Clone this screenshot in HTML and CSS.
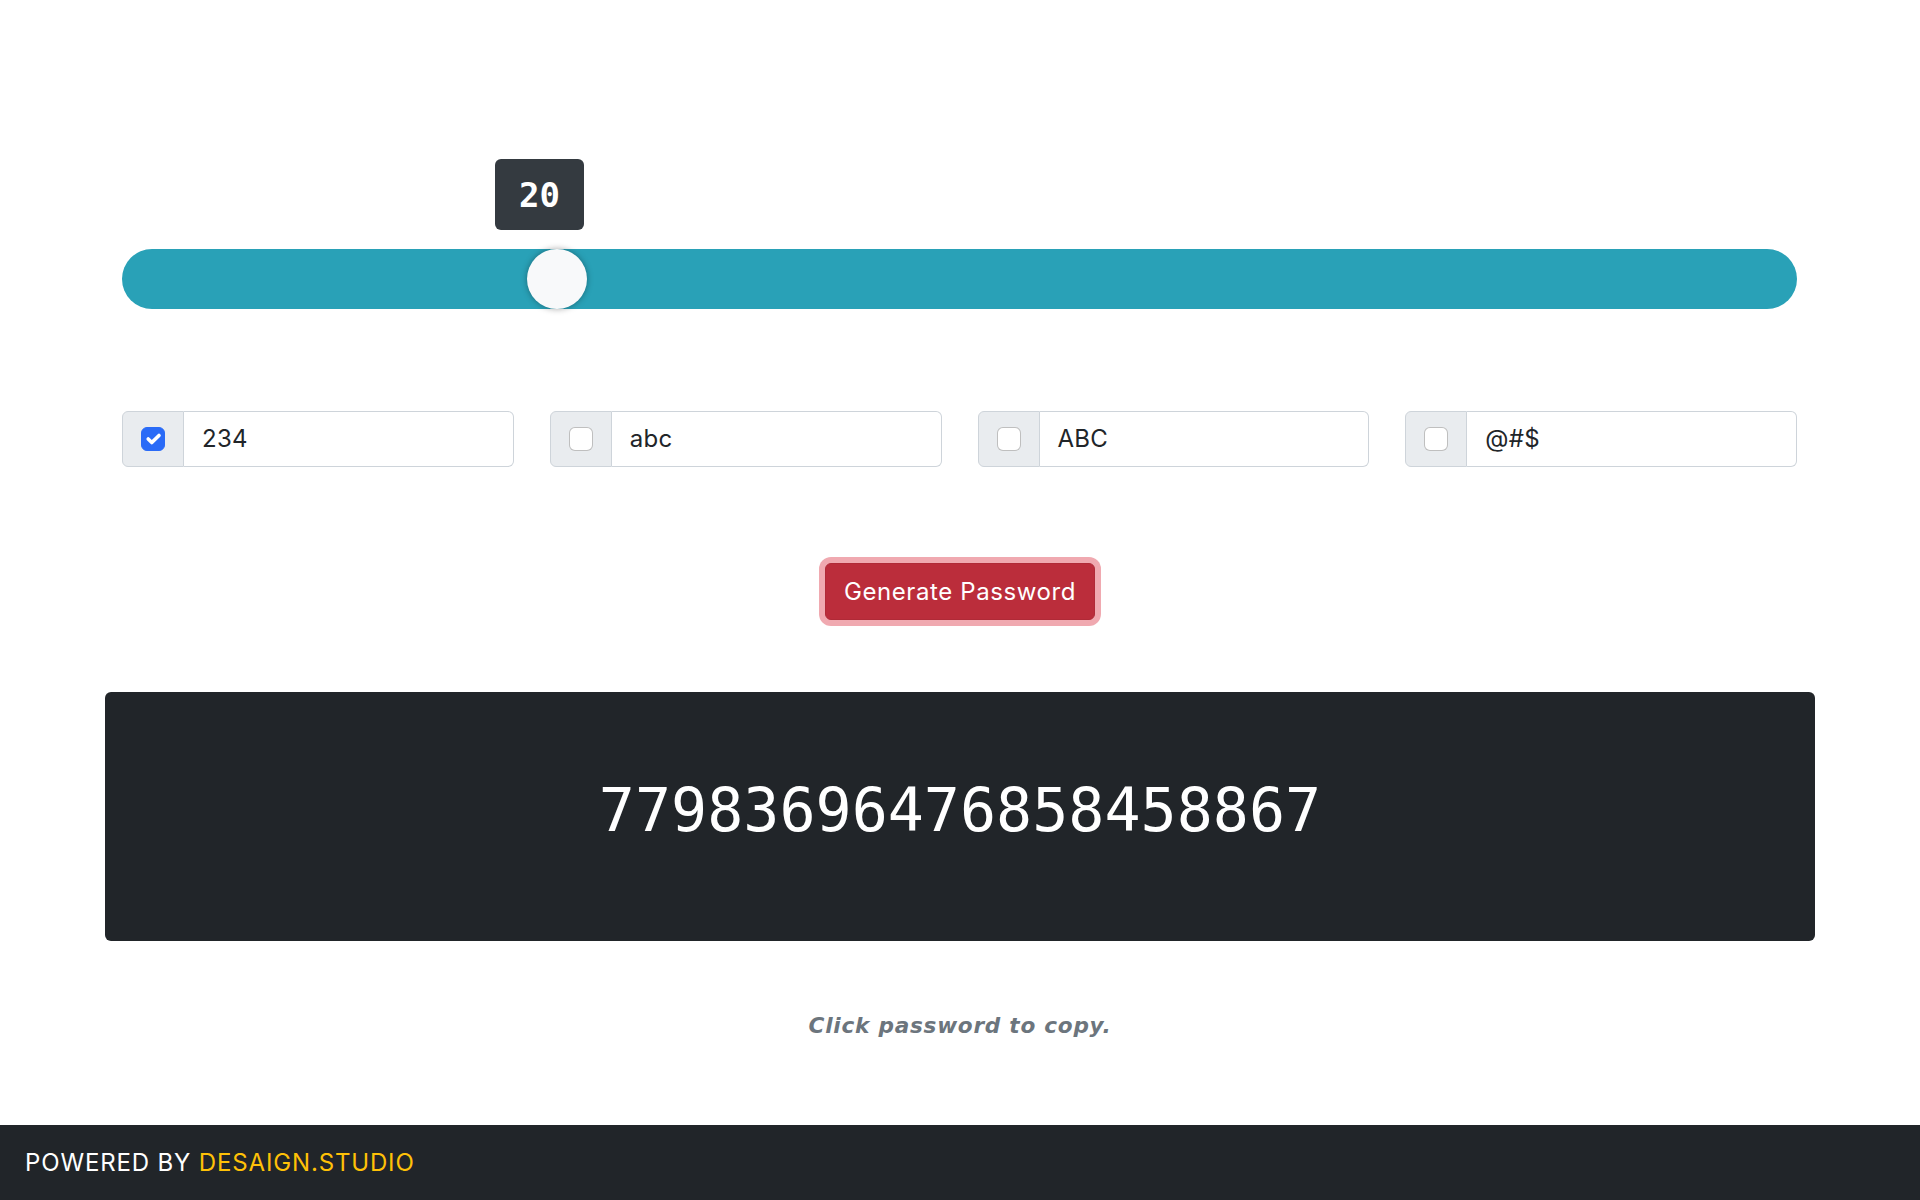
FILE: index.html
```html
<!DOCTYPE html>
<html lang="en">
<head>
<meta charset="utf-8">
<title>Password Generator</title>
<link rel="stylesheet" href="styles.css">
</head>
<body>
<main class="page">
  <div class="container">
    <div class="slider">
      <div class="track">
        <div class="thumb"></div>
      </div>
      <div class="bubble">20</div>
    </div>

    <div class="options">
      <div class="group">
        <span class="addon"><span class="check checked"><svg viewBox="0 0 20 20" width="24" height="24"><path d="M6 10l3 3l6-6" fill="none" stroke="#fff" stroke-width="3" stroke-linecap="round" stroke-linejoin="round"/></svg></span></span>
        <span class="field">234</span>
      </div>
      <div class="group">
        <span class="addon"><span class="check"></span></span>
        <span class="field">abc</span>
      </div>
      <div class="group">
        <span class="addon"><span class="check"></span></span>
        <span class="field">ABC</span>
      </div>
      <div class="group">
        <span class="addon"><span class="check"></span></span>
        <span class="field">@#$</span>
      </div>
    </div>

    <div class="actions">
      <button class="btn" type="button">Generate Password</button>
    </div>

    <div class="result">
      <h1 class="password">77983696476858458867</h1>
    </div>

    <p class="hint"><small>Click password to copy.</small></p>
  </div>
</main>
<footer class="footer">POWERED BY&nbsp;<span class="brand">DESAIGN.STUDIO</span></footer>
</body>
</html>
```

FILE: styles.css
```css
html, body {
  margin: 0;
  padding: 0;
}

body {
  font-family: Inter, "Open Sans", "Liberation Sans", sans-serif;
  color: #212529;
  background: #fff;
  min-height: 1200px;
  display: flex;
  flex-direction: column;
}

.page {
  flex: 1;
}

.container {
  width: 1710px;
  margin: 0 auto;
}

/* slider */
.slider {
  position: relative;
  margin: 249px 18px 0 17px;
}

.track {
  position: relative;
  height: 60px;
  border-radius: 30px;
  background: #29a1b7;
}

.thumb {
  position: absolute;
  left: 405px;
  top: 0;
  width: 60px;
  height: 60px;
  border-radius: 50%;
  background: #f8f9fa;
  box-shadow: 0 0 6px rgba(0, 0, 0, 0.35);
}

.bubble {
  position: absolute;
  left: 373px;
  top: -90px;
  width: 89px;
  height: 71px;
  border-radius: 6px;
  background: #343a40;
  color: #fff;
  display: flex;
  align-items: center;
  justify-content: center;
  font-family: "DejaVu Sans Mono", monospace;
  font-weight: bold;
  font-size: 34px;
}

/* options */
.options {
  display: grid;
  grid-template-columns: repeat(4, 1fr);
  gap: 36px;
  margin: 102px 18px 0 17px;
}

.group {
  display: flex;
  height: 56px;
}

.addon {
  box-sizing: border-box;
  width: 62px;
  flex: none;
  display: flex;
  align-items: center;
  justify-content: center;
  background: #e9ecef;
  border: 1px solid #ced4da;
  border-radius: 6px 0 0 6px;
}

.check {
  box-sizing: border-box;
  width: 24px;
  height: 24px;
  border-radius: 6px;
  border: 1px solid rgba(0, 0, 0, 0.25);
  background: #fff;
  display: flex;
}

.check.checked {
  background: #2a6bf7;
  border-color: #2a6bf7;
}

.check svg {
  margin: -1px;
}

.field {
  flex: 1;
  box-sizing: border-box;
  border: 1px solid #ced4da;
  border-left: 0;
  border-radius: 0 6px 6px 0;
  padding: 0 18px;
  font-size: 24px;
  line-height: 54px;
  letter-spacing: 0.3px;
  color: #212529;
  background: #fff;
}

/* button */
.actions {
  margin-top: 96px;
  text-align: center;
}

.btn {
  font-family: inherit;
  font-size: 24px;
  letter-spacing: 0.6px;
  line-height: 36px;
  height: 57px;
  padding: 0 18px;
  color: #fff;
  background: #bb2d3b;
  border: 1px solid #b02a37;
  border-radius: 6px;
  box-shadow: 0 0 0 6px rgba(225, 83, 97, 0.5);
  cursor: pointer;
}

/* result */
.result {
  margin-top: 72px;
  background: #212529;
  border-radius: 6px;
  color: #fff;
  text-align: center;
  padding: 82px 0 95px;
}

.password {
  margin: 0;
  font-family: "DejaVu Sans Mono", monospace;
  font-weight: 500;
  font-size: 60px;
  line-height: 72px;
}

.hint {
  margin: 69px 0 0;
  text-align: center;
  line-height: 32px;
}

.hint small {
  font-family: "DejaVu Sans", sans-serif;
  font-size: 21.6px;
  letter-spacing: 0.75px;
  font-weight: bold;
  font-style: italic;
  color: #6c757d;
}

/* footer */
.footer {
  height: 75px;
  background: #212529;
  color: #fff;
  display: flex;
  align-items: center;
  padding-left: 25px;
  font-size: 24px;
  letter-spacing: 0.85px;
}

.brand {
  color: #ffc107;
}
```
